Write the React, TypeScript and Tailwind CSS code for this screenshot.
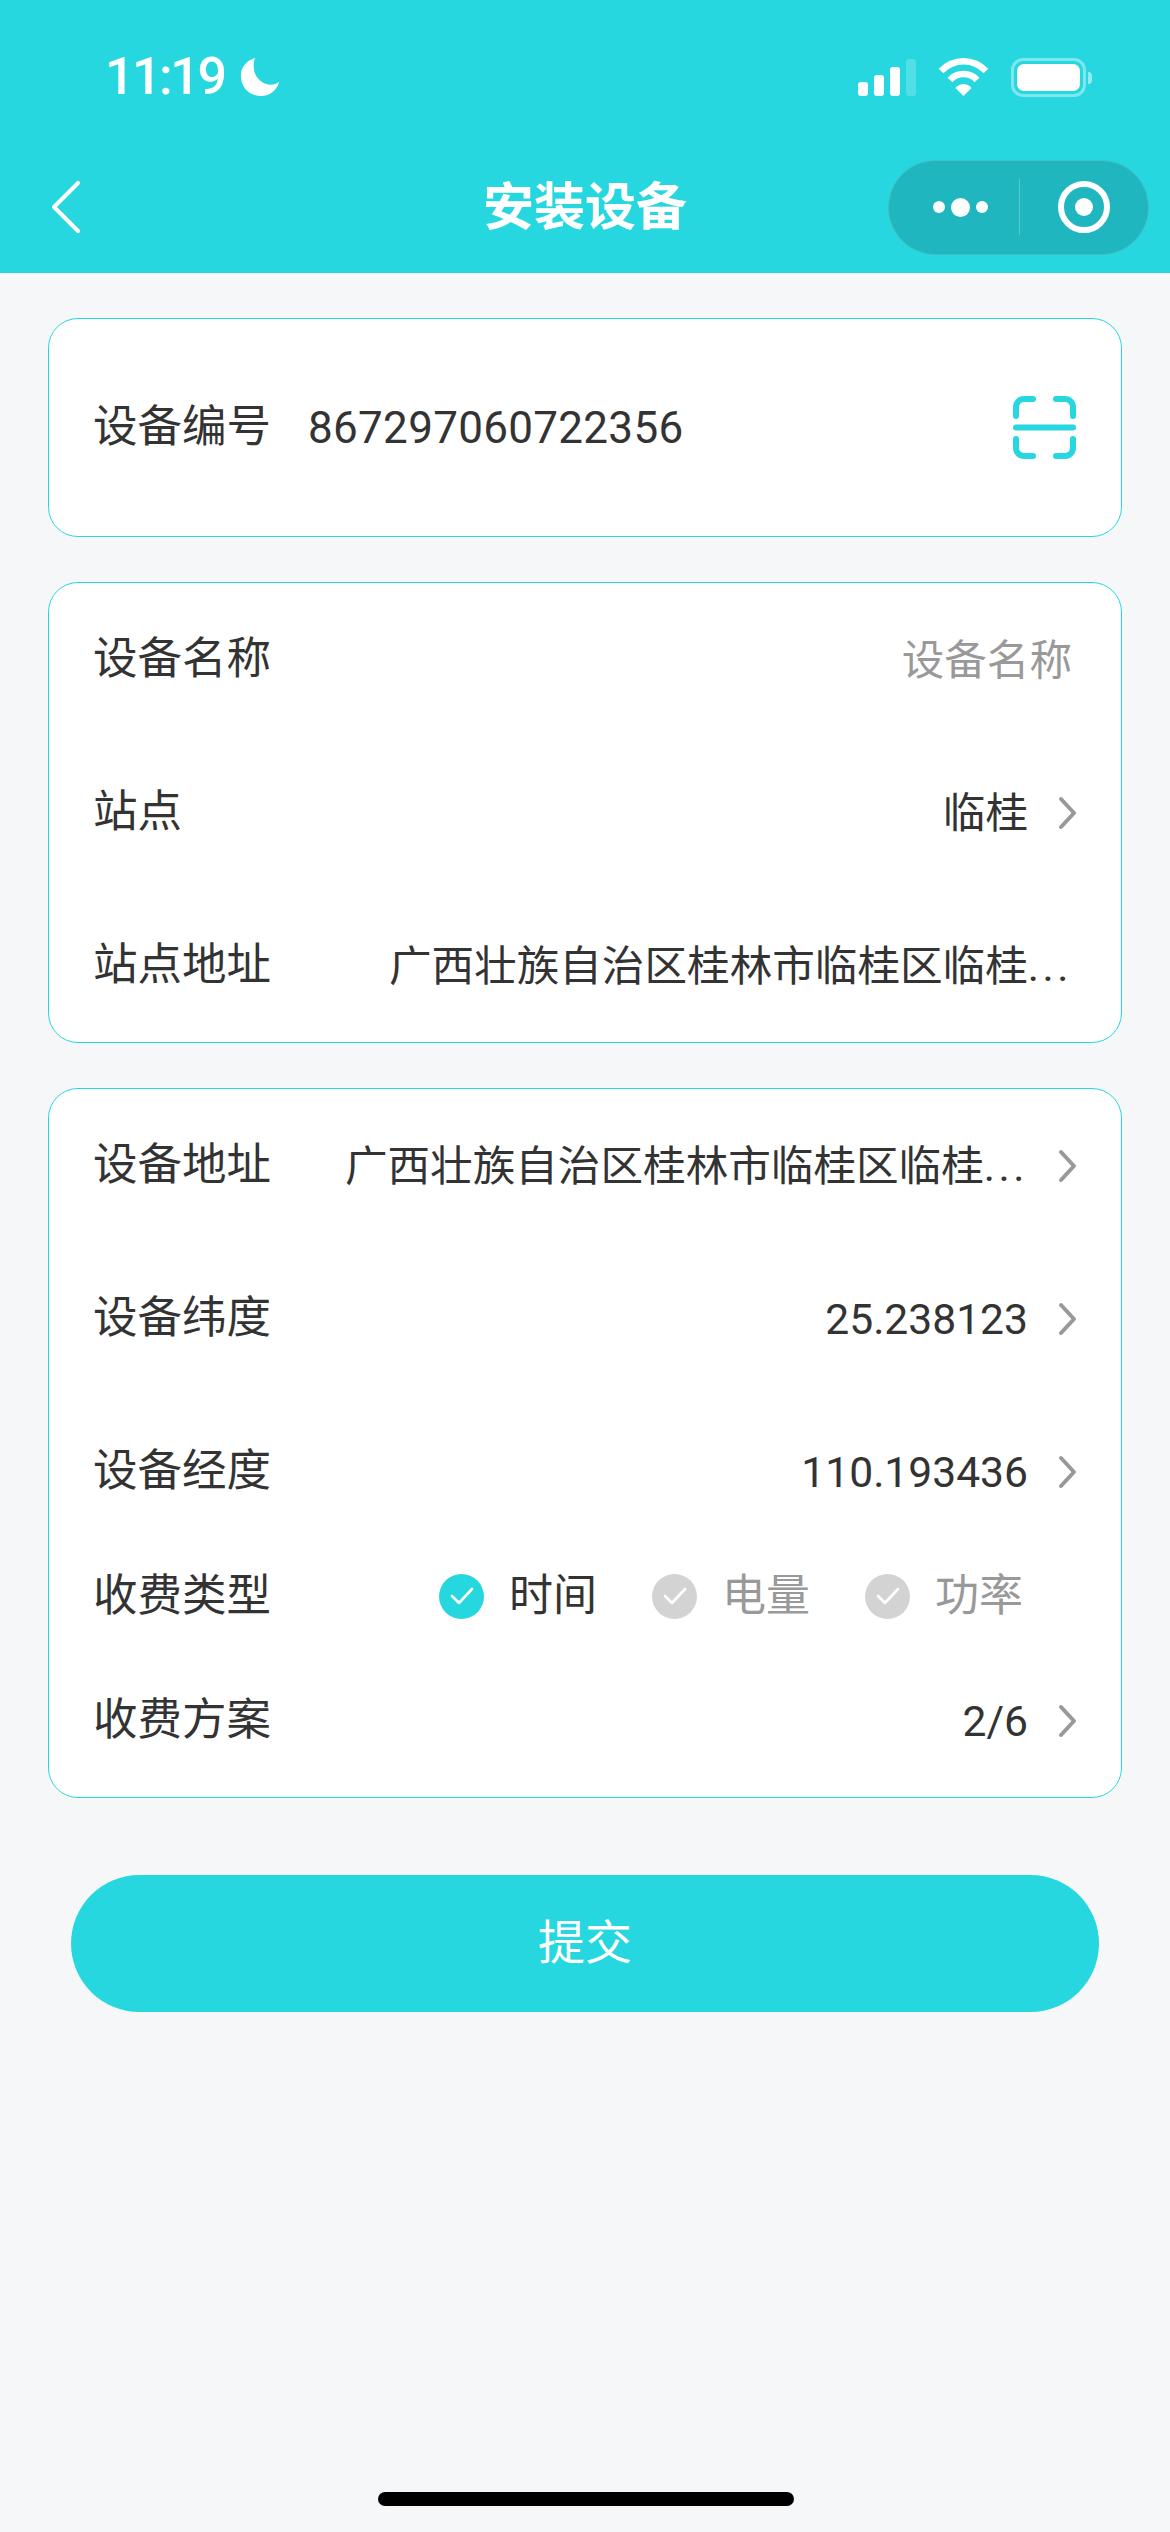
const FONT = "font-['Roboto','Noto_Sans_CJK_SC',sans-serif]";

function Chevron({ color = "#999999" }: { color?: string }) {
  return (
    <svg width="20" height="34" viewBox="0 0 20 34" className="shrink-0" fill="none">
      <path d="M3 3 L16 17 L3 31" stroke={color} strokeWidth="4" strokeLinecap="round" strokeLinejoin="round" />
    </svg>
  );
}

function Check({ on, label }: { on?: boolean; label: string }) {
  return (
    <div className="flex items-center gap-[25px]">
      <div className={`flex h-[45px] w-[45px] items-center justify-center rounded-full ${on ? "bg-[#26d7e0]" : "bg-[#d3d3d3]"}`}>
        <svg width="24" height="18" viewBox="0 0 24 18" fill="none">
          <path d="M2 9 L9 16 L22 2" stroke="#ffffff" strokeWidth="2.6" strokeLinecap="round" strokeLinejoin="round" />
        </svg>
      </div>
      <span className={`text-[44px] leading-none ${on ? "text-[#333333]" : "text-[#999999]"}`}>{label}</span>
    </div>
  );
}

function Row({ label, value, chevron, placeholder, dots }: { label: string; value: string; chevron?: boolean; placeholder?: boolean; dots?: boolean }) {
  return (
    <div className={`flex h-[153px] items-center justify-between ${chevron ? "pr-[43px]" : "pr-[49px]"} pl-[44px]`}>
      <span className="shrink-0 text-[44.5px] leading-none text-[#333333]">{label}</span>
      <div className="flex min-w-0 items-center gap-[30px]">
        <span className={`whitespace-nowrap text-[42.6px] leading-[60px] ${placeholder ? "text-[#999999]" : "text-[#333333]"}`}>
          {value}
          {dots && <span className="tracking-[3.5px]">...</span>}
        </span>
        {chevron && <Chevron />}
      </div>
    </div>
  );
}

export default function App() {
  const address = "广西壮族自治区桂林市临桂区临桂";
  return (
    <div className={`relative flex min-h-[2532px] w-[1170px] flex-col bg-[#f6f7f9] ${FONT}`}>
      <header className="bg-[#26d7e0]">
        <div className="flex h-[132px] items-start justify-between pl-[105px] pr-[78px] pt-[53px]">
          <div className="flex items-center gap-[16px]">
            <span className="text-[52px] font-medium leading-[48px] tracking-[-2.5px] text-white">11:19</span>
            <svg width="40" height="40" viewBox="0 0 40 40">
              <path d="M15 1 C5 4 0 12 1 21 C2 32 11 39 21 39 C30 39 37 33 39 25 C35 28 28 29 22 25 C14 20 12 10 15 1 Z" fill="#ffffff" />
            </svg>
          </div>
          <div className="flex items-start gap-[22px] pt-[5px]">
            <div className="flex h-[38px] items-end gap-[6px]">
              <div className="h-[14px] w-[10px] rounded-[3px] bg-white" />
              <div className="h-[21px] w-[10px] rounded-[3px] bg-white" />
              <div className="h-[29px] w-[10px] rounded-[3px] bg-white" />
              <div className="h-[37px] w-[10px] rounded-[3px] bg-white/20" />
            </div>
            <svg width="51" height="38" viewBox="0 0 51 38" fill="none">
              <path d="M3 13 C16 0 35 0 48 13" stroke="#ffffff" strokeWidth="6.5" />
              <path d="M12 22 C19 14 32 14 39 22" stroke="#ffffff" strokeWidth="6.5" />
              <path d="M17.5 30 C22 24.5 29 24.5 33.5 30 L25.5 38 Z" fill="#ffffff" />
            </svg>
            <div className="flex items-center gap-[2px]">
              <div className="flex h-[39px] w-[75px] items-center justify-center rounded-[12px] border-[3px] border-white/40">
                <div className="h-[27px] w-[63px] rounded-[7px] bg-white" />
              </div>
              <div className="h-[12px] w-[4px] rounded-r-full bg-white/50" />
            </div>
          </div>
        </div>
        <div className="relative flex h-[141px] items-center justify-between pl-[52px] pr-[21px] pt-[9px]">
          <svg width="28" height="52" viewBox="0 0 28 52" fill="none">
            <path d="M26 2 L2 26 L26 50" stroke="#ffffff" strokeWidth="4" strokeLinecap="round" strokeLinejoin="round" />
          </svg>
          <span className="absolute left-0 right-0 text-center text-[51px] font-bold leading-none text-white">安装设备</span>
          <div className="relative flex h-[95px] w-[261px] items-center rounded-full border border-white/15 bg-[#1fb6bf]">
            <div className="flex w-[130px] items-center justify-end gap-[6px] pr-[31px]">
              <div className="h-[12px] w-[12px] rounded-full bg-white" />
              <div className="h-[19px] w-[19px] rounded-full bg-white" />
              <div className="h-[12px] w-[12px] rounded-full bg-white" />
            </div>
            <div className="h-[56px] w-px bg-white/25" />
            <div className="flex flex-1 items-center justify-center">
              <div className="flex h-[52px] w-[52px] items-center justify-center rounded-full border-[6px] border-white">
                <div className="h-[18px] w-[18px] rounded-full bg-white" />
              </div>
            </div>
          </div>
        </div>
      </header>

      <main className="flex flex-col gap-[45px] px-[48px] pt-[45px]">
        <section className="flex h-[219px] items-center justify-between rounded-[30px] border border-[#26d7e0] bg-white pl-[44px] pr-[45px]">
          <div className="flex items-center gap-[37px]">
            <span className="text-[44.5px] leading-none text-[#333333]">设备编号</span>
            <span className="text-[44px] leading-none tracking-[0.3px] text-[#333333]">867297060722356</span>
          </div>
          <svg width="63" height="63" viewBox="0 0 63 63" fill="none" stroke="#26d7e0" strokeWidth="6" strokeLinecap="round">
            <path d="M3 20 V11 A8 8 0 0 1 11 3 H20" />
            <path d="M43 3 H52 A8 8 0 0 1 60 11 V20" />
            <path d="M3 31.5 H60" />
            <path d="M3 43 V52 A8 8 0 0 0 11 60 H20" />
            <path d="M43 60 H52 A8 8 0 0 0 60 52 V43" />
          </svg>
        </section>

        <section className="flex flex-col rounded-[30px] border border-[#26d7e0] bg-white">
          <Row label="设备名称" value="设备名称" placeholder />
          <Row label="站点" value="临桂" chevron />
          <Row label="站点地址" value={address} dots />
        </section>

        <section className="flex flex-col rounded-[30px] border border-[#26d7e0] bg-white">
          <Row label="设备地址" value={address} chevron dots />
          <Row label="设备纬度" value="25.238123" chevron />
          <Row label="设备经度" value="110.193436" chevron />
          <div className="flex h-[96px] items-center justify-between pl-[44px] pr-[98px]">
            <span className="text-[44.5px] leading-none text-[#333333]">收费类型</span>
            <div className="flex items-center gap-[55px]">
              <Check on label="时间" />
              <Check label="电量" />
              <Check label="功率" />
            </div>
          </div>
          <Row label="收费方案" value="2/6" chevron />
        </section>
      </main>

      <div className="px-[71px] pt-[77px]">
        <button className="flex h-[137px] w-full items-center justify-center rounded-full bg-[#26d7e0] text-[47px] text-white">提交</button>
      </div>

      <div className="absolute bottom-[26px] left-[378px] h-[14px] w-[416px] rounded-full bg-black" />
    </div>
  );
}
